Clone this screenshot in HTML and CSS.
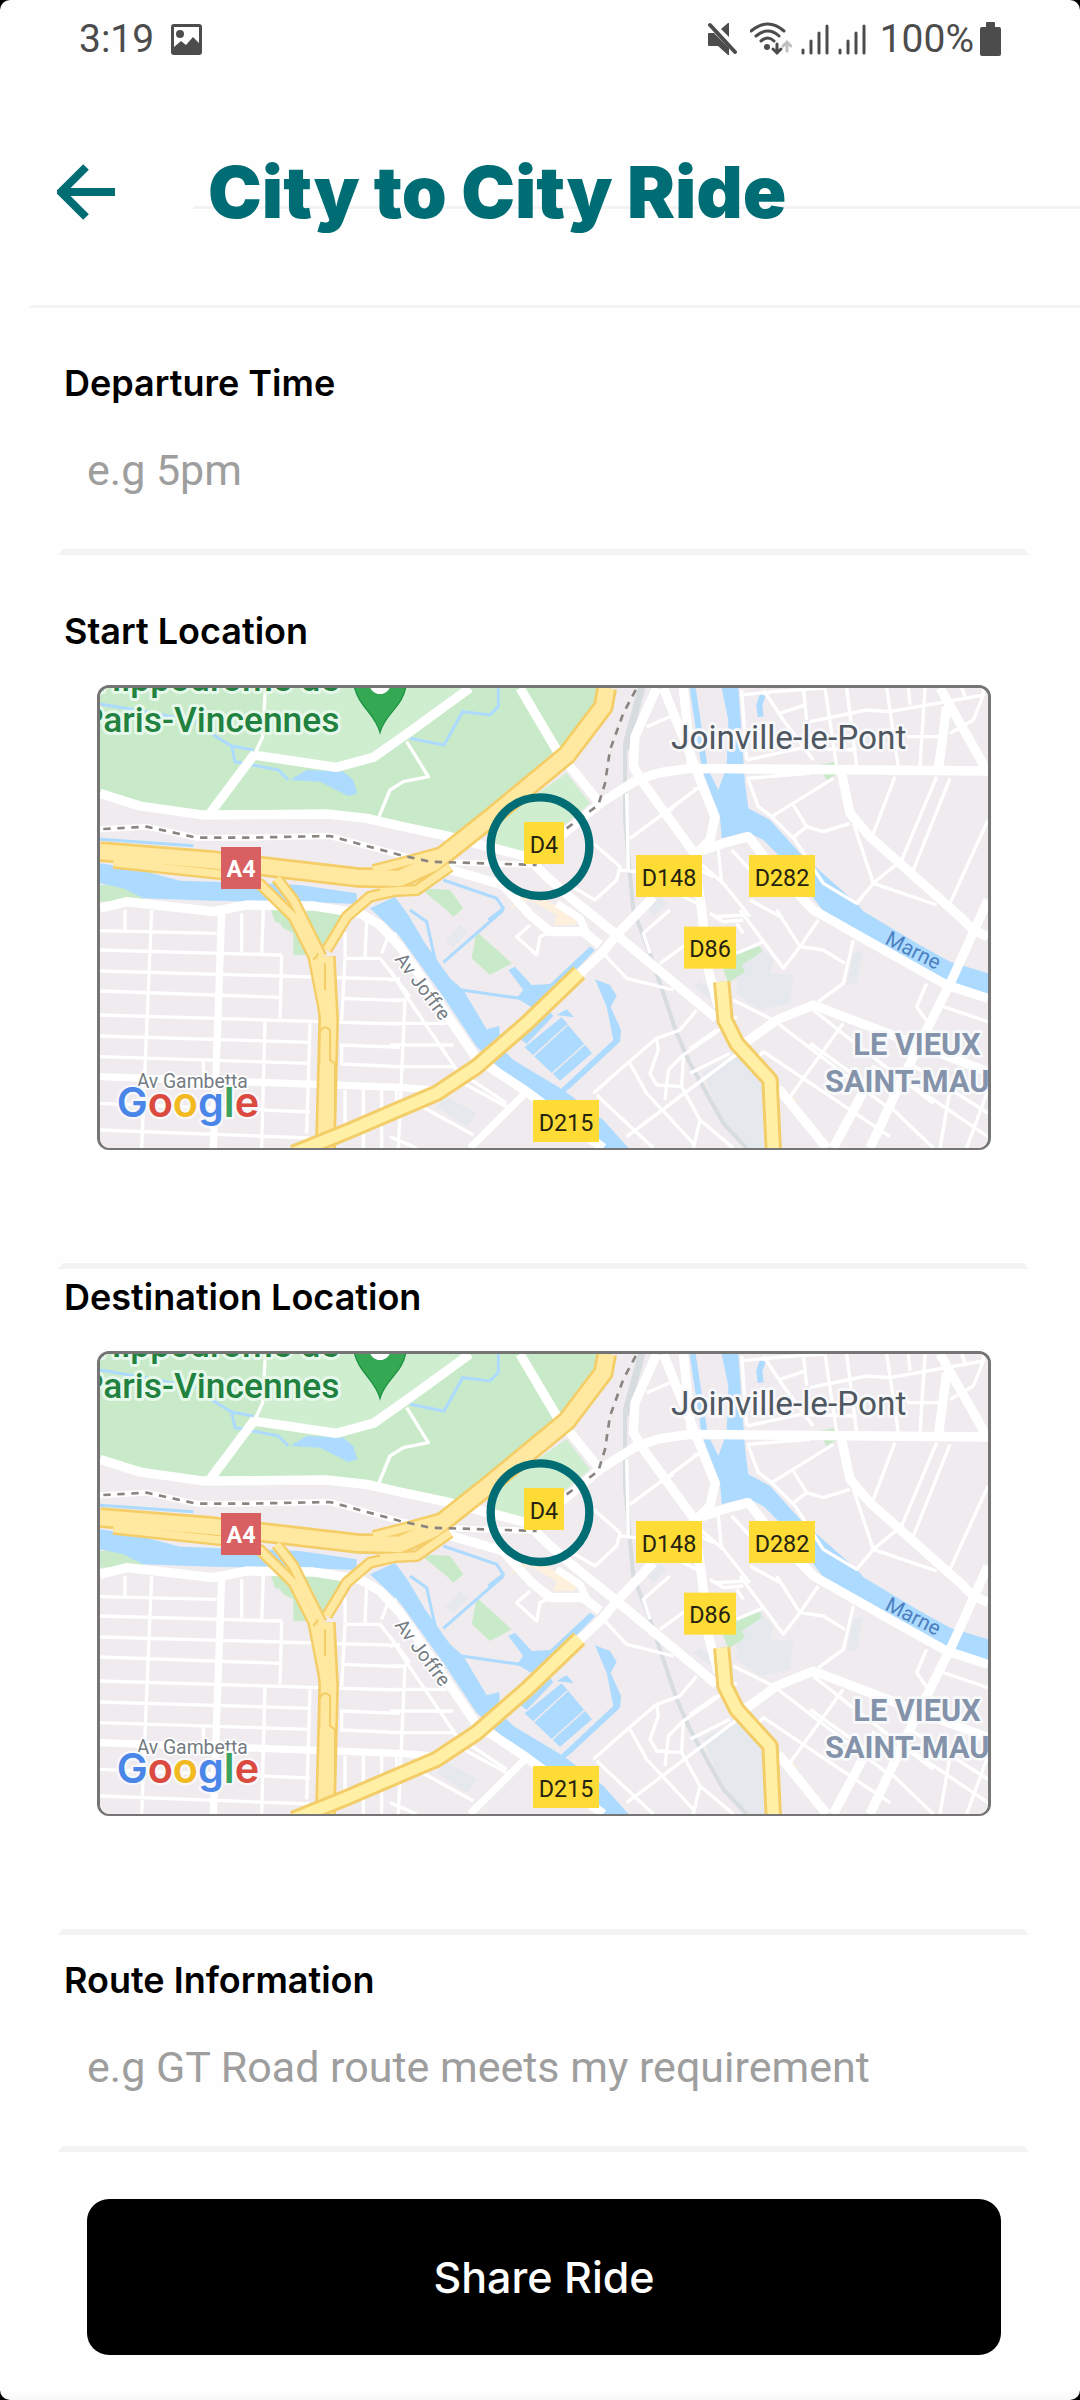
FILE: index.html
```html
<!DOCTYPE html>
<html lang="en">
<head>
<meta charset="utf-8">
<meta name="viewport" content="width=device-width, initial-scale=1">
<title>City to City Ride</title>
<link rel="stylesheet" href="styles.css">
</head>
<body>
<svg class="defs" aria-hidden="true">
  <symbol id="streets" viewBox="60 54 2664 1380">
    <rect class="land" x="60" y="54" width="2664" height="1380"/>
    <path class="block" d="M1868 1205L1990 1150 2050 1240 2055 1434 2000 1434 1930 1360ZM1970 850L2040 828 2080 870 2070 910 2140 915 2130 1000 2040 1020 1970 970ZM2320 850L2350 840 2330 940 2300 945ZM2350 190L2420 180 2430 215 2355 225ZM1095 815L1140 765 1165 785 1120 830ZM1070 1310L1100 1280 1190 1330 1160 1370ZM1700 710L1740 680 1760 700 1720 740ZM1840 950L1860 935 1900 960 1895 990Z"/>
    <g class="park">
      <path d="M60 54H1575L1540 120 1440 250 1250 400 1110 500 930 460 860 445 740 432 370 435 200 410 60 370Z"/>
      <path d="M60 645L130 645 195 688 60 695ZM570 710H830L730 830 700 855H640V790L610 775 600 760 585 755ZM1020 655L1110 660 1150 715 1120 740 1100 720ZM1190 785L1295 880 1230 915 1175 865ZM1960 855L2040 828 2045 845 1985 885 1995 905 1945 938 1930 900ZM2215 285L2265 276 2275 310 2240 330Z"/>
    </g>
    <path class="park-light" d="M555 54H1165L930 230 770 290 525 250 550 200ZM1460 310L1530 400 1460 460 1330 545 1240 520 1270 440Z"/>
    <path class="commerce" d="M1290 715L1330 660 1400 690 1500 750 1480 765 1420 765 1430 735 1350 690ZM2090 1240L2150 1290 2145 1300 2100 1265Z"/>
    <g class="water">
      <path d="M630 330L680 300 790 305 820 330 832 370 805 378 720 335Z"/>
      <path d="M60 580L160 595 300 632 540 640 660 645 830 670 830 702 700 697 400 692 190 685 130 655 60 640Z"/>
      <path d="M870 715L945 680 985 735 1035 820 1110 925 1150 960 1220 1078 1258 1068 1260 1130 1300 1170 1450 1260 1570 1350 1645 1434H1570L1340 1270 1190 1130 1090 980 960 800Z"/>
      <path d="M1285 900L1305 890 1355 945 1410 942 1530 830 1545 840 1430 960 1370 1020 1310 985 1330 960ZM1318 1105L1405 1020 1420 1038 1340 1122ZM1334 1132L1445 1042 1536 1150 1440 1232ZM1430 1035L1460 1018 1482 1042ZM1545 928L1590 945 1610 978 1592 1010 1623 1080 1620 1115 1475 1250 1450 1270 1445 1255 1600 1110 1580 1010Z"/>
      <path d="M1925 54H1975L1995 340 2005 415 2070 450 2160 550 2330 700 2350 724 2510 820 2610 875 2724 910V975L2610 935 2520 900 2230 724 2130 590 2050 510 2000 485 1925 505 1920 440 1870 310H1890L1915 360 1940 290 1945 150Z"/>
    </g>
    <g class="stream">
      <path d="M60 102L200 125 350 155 400 195 455 228 520 240M455 228L465 275 595 300 625 330M990 205L1092 225 1148 125 1230 135 1255 110V54M60 508L340 527M1090 630L1250 685 1270 715 1225 750M1090 877L1270 720M1145 960L1320 985M990 720L1040 755 1070 890"/>
      <path class="stream-wide" d="M1838 54L1875 300M2048 75L2038 105 2042 140"/>
    </g>
    <path class="dock" d="M1358 1160L1462 1065M1408 1218L1515 1122M1335 1075L1350 1085"/>
    <g class="rail"><path d="M1680 54L1635 220 1635 450 1660 720 1710 850 1790 1090 1830 1180 1930 1360 2000 1434M1690 54L1640 240"/></g>

    <g class="lane">
      <path d="M60 782L410 790M60 840L605 855M60 903L960 928M60 963L600 982M60 1035L960 1062M60 1098L690 1117M60 1160L690 1180M60 1300L690 1326M60 1380L690 1404M135 720V780M215 720L185 1434M485 730V845M550 720L545 850M605 855L600 1045M555 1050L545 1434M690 1060L680 1390M370 1170V1220M795 865L785 1050M795 865H900L990 980M860 750L855 860M785 985L960 992M960 1132L785 1125V1182L960 1190M795 1260V1370M850 1260V1434M905 1260V1434M905 850L920 810 950 790M950 1260V1330M795 785V860"/>
      <path d="M930 990H980M930 1060H1100M930 1125H1120M930 1190H1125M975 990L955 1434M930 900L980 980 1130 1200 1280 1300M990 1290L1180 1395M930 1400L1010 1434M930 930L960 925M1150 1240L1280 1310"/>
      <path d="M1570 850L1640 925 1780 960M1850 1020L1800 1080 1730 1105 1630 1190 1540 1270M1730 1105L1735 1140 1710 1210 1730 1245 1810 1250M1970 1040L1890 1100 1810 1155 1765 1200 1755 1290M2000 1130L1640 1400M1650 1180L1700 1270 1840 1420M1550 1275L1720 1434M1810 1160L1805 1250 1860 1350 1840 1434M1770 720L1690 790 1710 850M1830 815L1740 880M1860 1350L1960 1434M1350 765L1310 800 1370 855 1380 800 1400 790"/>
      <path d="M1770 140L1700 170M1860 350L1650 505M1640 370L1645 600M1540 520L1620 590 1610 630 1545 690 1460 640M1620 600L1670 605M1860 600L1900 620M1770 660L1850 700M1740 440L1780 415"/>
      <path d="M1985 60L2000 270M1980 75L2080 65 2230 54M2050 60L2110 150 2200 270M2170 54L2180 150M2235 54L2270 290M2300 54L2330 290M2420 54L2455 290M2535 54L2520 290M2485 54L2490 105M2100 130L2175 105M2190 155L2360 120 2430 125 2710 75 2680 150 2610 190M2000 270L2160 235 2330 240M2480 200H2590M1840 360L1860 350M2645 54L2655 80M2710 54V75"/>
      <path d="M2000 325L2190 310M2005 330L2035 410 2075 440 2145 510 2230 640 2330 700 2380 640 2465 570M2075 440L2260 325M2140 405L2180 470 2230 485 2310 460M2180 470L2135 505M2320 460L2380 640 2570 705M2445 320L2380 490M2570 320L2465 570M2610 325L2500 600M2724 450L2610 700M1860 580L1930 640 2010 740M1915 540L1925 640M1955 540L2010 600M2010 690L2100 740M1900 740L2000 735"/>
      <path d="M2090 720L2160 830 2110 895 1980 720M2215 750L2160 830 2230 840 2295 880M2320 810L2290 940 2215 995M1890 730L1930 755 1990 750M1960 990L2080 1050 2420 1310M1970 850L2050 815M1830 1135L1910 1080M1830 1210L1950 1150M2010 1190L2050 1145 2430 1400M2290 1060L2130 1280M2200 1020L2300 1100 2560 1300M2540 940L2510 1010 2545 1060M2590 1010L2724 1055M2400 1180L2724 1400M2490 1180L2724 1330M2610 1260L2580 1434M2724 1260L2660 1434M2420 1300L2560 1434M2190 1120L2400 1270M1970 760L1990 790"/>
    </g>
    <path class="lane" d="M980 215L1045 320 970 335 930 360 895 445M525 250L548 200 556 54"/>

    <g class="road">
      <path d="M60 370L180 408 370 435 740 432 860 445 960 468 1110 500 1340 560 1400 620 1480 690 1610 795 1910 1045"/>
      <path d="M390 430L525 250M520 255L770 292 880 262 990 185 1170 54"/>
      <path d="M1320 54L1430 240 1560 400M1440 500L1560 400 1670 330 1740 308 1830 295 2724 303"/>
      <path d="M1730 54L1665 200 1660 290 1690 340 1840 545 1865 720 1885 900 1915 1010"/>
      <path d="M1750 54L1845 290 1905 440 1890 510 1845 555M1810 54L1835 290M1850 548L1930 520 2005 500 2060 570 2200 720 2430 850 2600 945 2724 985"/>
      <path d="M2580 54L2720 300M2600 110L2575 300M2285 310L2310 430 2370 500 2640 740 2680 780 2724 800"/>
      <path d="M2724 690L2620 920 2480 1200 2370 1434M2390 1190L2260 1434M1980 1130L2090 1050 2200 1005 2370 1070 2724 1205M2095 1255L2240 1434"/>
      <path d="M1720 680L1610 795 1570 845 1500 910M1080 590L1270 645 1350 735 1410 785H1510L1560 825"/>
      <path d="M60 715L140 695 400 725 500 705 700 708 840 730 900 765 960 830 1190 1165 1340 1265 1570 1434"/>
      <path class="road-thin" d="M425 725L400 1434M60 1220L960 1252 1090 1262M1340 1265L1170 1434M1430 700L1500 745 1520 790"/>
    </g>

    <path class="track-bed" d="M60 478L200 470 350 503 500 503 750 498 960 555 1050 575 1370 585"/>
    <g class="highway-edge">
      <path d="M100 578L420 612 540 642 640 740 700 860 735 1040M590 625L640 690 725 860M960 660L870 680 800 740 740 840M900 665L1010 660 1110 590M880 600L960 580 1090 545 1150 500"/>
      <path class="wide" d="M60 545L400 572 830 622 960 625 1060 580 1230 445 1460 255 1570 110 1580 54M736 860L746 1050 736 1434"/>
    </g>
    <g class="highway">
      <path d="M100 578L420 612 540 642 640 740 700 860 735 1040M590 625L640 690 725 860M960 660L870 680 800 740 740 840M900 665L1010 660 1110 590M880 600L960 580 1090 545 1150 500"/>
      <path class="wide" d="M60 545L400 572 830 622 960 625 1060 580 1230 445 1460 255 1570 110 1580 54M736 860L746 1050 736 1434"/>
    </g>
    <path class="highway-seam" d="M718 1180V1090Q730 1060 750 1080V1170L765 1180V1434M700 870L715 850M735 880V960"/>
    <path class="artery-edge" d="M640 1450L800 1385 940 1325 1070 1270 1190 1190 1340 1060 1498 908M1925 935L1935 1050 1970 1120 2070 1230 2080 1440"/>
    <path class="artery" d="M640 1450L800 1385 940 1325 1070 1270 1190 1190 1340 1060 1498 908M1925 935L1935 1050 1970 1120 2070 1230 2080 1440"/>
    <path class="track" d="M70 477L200 470 350 503 500 503 750 498 960 555 1050 575 1370 585M1460 475L1555 405 1575 340 1590 240 1630 130 1670 54"/>

    <path class="pin" d="M822 46C835 110 885 130 900 187 915 130 970 110 978 46Z"/>
    <circle class="pin-hole" cx="900" cy="40" r="32"/>
    <g class="shield">
      <rect x="1332" y="456" width="120" height="126"/>
      <rect x="1668" y="555" width="198" height="126"/>
      <rect x="2007" y="555" width="198" height="126"/>
      <rect x="1812" y="770" width="156" height="126"/>
      <rect x="1359" y="1290" width="198" height="126"/>
    </g>
    <rect class="shield-red" x="423" y="531" width="120" height="126"/>
    <circle class="marker" cx="1380" cy="530" r="148"/>
  </symbol>
</svg>

<main class="screen">
  <div class="status">
    <span>3:19</span>
    <svg class="status-picture" width="31" height="31" viewBox="0 0 31 31" aria-hidden="true"><path fill-rule="evenodd" d="M3 0H28Q31 0 31 3V28Q31 31 28 31H3Q0 31 0 28V3Q0 0 3 0ZM3 3V23L10 17 15 21 22 13 28 19V3Z"/><circle cx="9" cy="10" r="4"/></svg>
    <span class="status-icons">
      <svg width="30" height="34" viewBox="0 0 30 34" aria-hidden="true"><path d="M1 11H6L21 26V33H20L10 24H1Q0 24 0 23V12Q0 11 1 11ZM13 7L20 1H21V15Z"/><path class="line slash" d="M2 3L27 30"/></svg>
      <svg class="status-wifi" width="42" height="34" viewBox="0 0 42 34" aria-hidden="true"><path class="line" d="M1 9Q18-5 34 9M6 14Q18 4 29 14M11 19Q18 13 24 19"/><circle cx="17" cy="25" r="3"/><path class="line" d="M27 22V31M23 27L27 31 31 27"/><path class="line faint" d="M37 29V20M33 24L37 20 41 24"/></svg>
      <svg class="status-signal" width="28" height="32" viewBox="0 0 28 32" aria-hidden="true"><path class="line" d="M2 27V30M10 18V30M18 10V30M26 3V30"/></svg>
      <svg class="status-signal" width="28" height="32" viewBox="0 0 28 32" aria-hidden="true"><path class="line" d="M2 27V30M10 18V30M18 10V30M26 3V30"/></svg>
      <span class="status-level">100%</span>
      <svg class="status-battery" width="21" height="34" viewBox="0 0 21 34" aria-hidden="true"><path d="M6 1Q6 0 7 0H14Q15 0 15 1V5H19Q21 5 21 7V32Q21 34 19 34H2Q0 34 0 32V7Q0 5 2 5H6Z"/></svg>
    </span>
  </div>

  <header class="header">
    <button class="back" type="button" aria-label="Back">
      <svg width="58" height="56" viewBox="0 0 58 56" aria-hidden="true"><path d="M29 3L4 28 29 53M4 28H58"/></svg>
    </button>
    <h1 class="title">City to City Ride</h1>
  </header>

  <form class="form">
    <div class="field field-first">
      <label class="label" for="time">Departure Time</label>
      <input class="input" id="time" type="text" placeholder="e.g 5pm">
    </div>

    <section class="field field-map field-start">
      <h2 class="label">Start Location</h2>
      <svg class="map" viewBox="60 54 2664 1380" role="img" aria-label="Start location map">
        <use href="#streets" x="60" y="54" width="2664" height="1380"/>
        <g class="place-park"><text x="778" y="64">Hippodrome de</text><text x="778" y="187">Paris-Vincennes</text></g>
        <text class="place-town" x="1773" y="238">Joinville-le-Pont</text>
        <g class="place-district"><text x="2320" y="1154">LE VIEUX</text><text x="2235" y="1265">SAINT-MAUR</text></g>
        <text class="place-river" transform="translate(2412 820) rotate(27)">Marne</text>
        <text class="place-street" transform="translate(942 868) rotate(53)">Av Joffre</text>
        <text class="place-street" x="170" y="1255">Av Gambetta</text>
        <g class="road-code"><text x="1392" y="548">D4</text><text x="1767" y="647">D148</text><text x="2106" y="647">D282</text><text x="1890" y="862">D86</text><text x="1458" y="1382">D215</text></g>
        <text class="road-code road-code-red" x="483" y="622">A4</text>
        <text class="google" x="110" y="1340"><tspan class="g-blue">G</tspan><tspan class="g-red">o</tspan><tspan class="g-yellow">o</tspan><tspan class="g-blue">g</tspan><tspan class="g-green">l</tspan><tspan class="g-red">e</tspan></text>
      </svg>
    </section>

    <section class="field field-map">
      <h2 class="label">Destination Location</h2>
      <svg class="map" viewBox="60 54 2664 1380" role="img" aria-label="Destination location map">
        <use href="#streets" x="60" y="54" width="2664" height="1380"/>
        <g class="place-park"><text x="778" y="64">Hippodrome de</text><text x="778" y="187">Paris-Vincennes</text></g>
        <text class="place-town" x="1773" y="238">Joinville-le-Pont</text>
        <g class="place-district"><text x="2320" y="1154">LE VIEUX</text><text x="2235" y="1265">SAINT-MAUR</text></g>
        <text class="place-river" transform="translate(2412 820) rotate(27)">Marne</text>
        <text class="place-street" transform="translate(942 868) rotate(53)">Av Joffre</text>
        <text class="place-street" x="170" y="1255">Av Gambetta</text>
        <g class="road-code"><text x="1392" y="548">D4</text><text x="1767" y="647">D148</text><text x="2106" y="647">D282</text><text x="1890" y="862">D86</text><text x="1458" y="1382">D215</text></g>
        <text class="road-code road-code-red" x="483" y="622">A4</text>
        <text class="google" x="110" y="1340"><tspan class="g-blue">G</tspan><tspan class="g-red">o</tspan><tspan class="g-yellow">o</tspan><tspan class="g-blue">g</tspan><tspan class="g-green">l</tspan><tspan class="g-red">e</tspan></text>
      </svg>
    </section>

    <div class="field field-route">
      <label class="label" for="route">Route Information</label>
      <input class="input" id="route" type="text" placeholder="e.g GT Road route meets my requirement">
    </div>

    <button class="share" type="submit">Share Ride</button>
  </form>
</main>
</body>
</html>
```

FILE: styles.css
```css
* { box-sizing: border-box; }

body {
  margin: 0;
  background: #000;
  font-family: Inter, "Liberation Sans", sans-serif;
}

.defs { display: block; width: 0; height: 0; }

.screen {
  display: flex;
  flex-direction: column;
  min-height: 100vh;
  overflow: hidden;
  border-radius: 10px;
  background: linear-gradient(to top, #f8f8f8, #fefefe 8px);
}

/* Status bar */
.status {
  display: flex;
  align-items: center;
  height: 78px;
  padding: 0 79px 0 79px;
  color: #4c4c4c;
  fill: currentColor;
  font: 400 39px/48px Roboto, sans-serif;
}
.status-picture { margin-left: 17px; }
.status-icons { display: flex; align-items: center; margin-left: auto; }
.status-wifi { margin-left: 12px; }
.status-signal { margin-left: 9px; }
.status-level { margin-left: 14px; }
.status-battery { margin-left: 6px; }
.line { fill: none; stroke: currentColor; stroke-width: 3; stroke-linecap: round; }
.slash { stroke-width: 4; }
.faint { opacity: .35; }

/* Header */
.header {
  position: relative;
  display: flex;
  align-items: center;
  height: 230px;
  margin-left: 29px;
  border-bottom: 3px solid #f3f3f3;
  border-left: 3px solid transparent;
}
.header::before {
  content: "";
  position: absolute;
  top: 128px;
  right: 0;
  left: 160px;
  border-bottom: 3px solid #f3f3f3;
  border-left: 3px solid transparent;
}
.back {
  display: flex;
  margin: 0 0 0 25px;
  padding: 0;
  border: 0;
  background: none;
}
.back path { fill: none; stroke: #006d75; stroke-width: 8; }
.title {
  position: relative;
  margin: 0 0 0 93px;
  color: #006d75;
  font-size: 72px;
  font-weight: 900;
  line-height: 88px;
}

/* Form */
.form { display: flex; flex-direction: column; }
.field {
  display: flex;
  flex-direction: column;
  margin: 0 51px 0 58px;
  padding: 8px 0 29px;
  border: solid transparent;
  border-width: 0 5px 6px;
  border-bottom-color: #f3f3f3;
}
.field-first { padding-top: 55px; }
.field-route { padding-top: 25px; }
.field-map { padding-bottom: 113px; }
.field-start { padding-top: 56px; }
.label {
  margin: 0;
  padding-left: 1px;
  color: #000;
  font-size: 36px;
  font-weight: 600;
  line-height: 40px;
}
.input {
  height: 100px;
  margin-top: 17px;
  padding: 0 0 0 24px;
  border: 0;
  outline: 0;
  background: none;
  color: #222;
  font: 400 43px/50px Roboto, sans-serif;
}
.input::placeholder { color: #9e9e9e; opacity: 1; }
.share {
  height: 156px;
  margin: 47px 79px 45px 87px;
  border: 0;
  border-radius: 22px;
  background: #000;
  color: #fff;
  font: 500 43px/50px Inter, sans-serif;
}

/* Map */
.map {
  display: block;
  margin: 34px 33px 0 34px;
  border: solid #757575;
  border-width: 3px 3px 2px;
  border-radius: 12px;
  font-family: Roboto, sans-serif;
}
.land { fill: #efebee; }
.park { fill: #c8eac8; }
.park-light { fill: #cfeed0; }
.block { fill: #e5e9ed; }
.commerce { fill: #fdf0dc; }
.water { fill: #addaff; }
.stream { fill: none; stroke: #addaff; stroke-width: 9; }
.stream-wide { stroke-width: 18; }
.dock { fill: none; stroke: #efebee; stroke-width: 5; }
.rail { fill: none; stroke: #d7dcdf; stroke-width: 12; }
.lane { fill: none; stroke: #fff; stroke-width: 10; stroke-linejoin: round; }
.road { fill: none; stroke: #fff; stroke-width: 28; stroke-linejoin: round; }
.road-thin { stroke-width: 22; }
.track-bed { fill: none; stroke: #fff; stroke-width: 18; }
.track { fill: none; stroke: #8b8581; stroke-width: 8; stroke-dasharray: 22 20; }
.highway-edge { fill: none; stroke: #f5cd67; stroke-width: 36; stroke-linejoin: round; }
.highway-edge .wide { stroke-width: 62; }
.highway { fill: none; stroke: #ffe8a0; stroke-width: 22; stroke-linejoin: round; }
.highway .wide { stroke-width: 46; }
.highway-seam { fill: none; stroke: #f5cd67; stroke-width: 6; }
.artery-edge { fill: none; stroke: #f3cd68; stroke-width: 52; stroke-linejoin: round; }
.artery { fill: none; stroke: #fff0a6; stroke-width: 34; stroke-linejoin: round; }
.pin { fill: #34a853; stroke: #1d9142; stroke-width: 4; }
.pin-hole { fill: #fff; }
.shield { fill: #ffdc35; }
.shield-red { fill: #d96062; }
.marker { fill: none; stroke: #006d75; stroke-width: 25; }

.map text { paint-order: stroke; stroke-linejoin: round; }
.place-park { fill: #21813f; stroke: #e6f8ea; stroke-width: 18; font-size: 106px; font-weight: 500; text-anchor: end; }
.place-town { fill: #4f5861; stroke: #f8f8fa; stroke-width: 16; font-size: 100px; }
.place-district { fill: #8493aa; stroke: #f8f9fb; stroke-width: 16; font-size: 92px; font-weight: 700; }
.place-river { fill: #4a7fc0; font-size: 62px; }
.place-street { fill: #747b82; stroke: #fff; stroke-width: 10; font-size: 58px; }
.road-code { fill: #25230f; font-size: 70px; text-anchor: middle; }
.road-code-red { fill: #fff; font-weight: 700; }
.google { stroke: #f8f8fa; stroke-width: 14; font: 600 124px Inter, sans-serif; }
.g-blue { fill: #4a86e8; }
.g-red { fill: #db4a3f; }
.g-yellow { fill: #f2b920; }
.g-green { fill: #3ba35b; }
```
